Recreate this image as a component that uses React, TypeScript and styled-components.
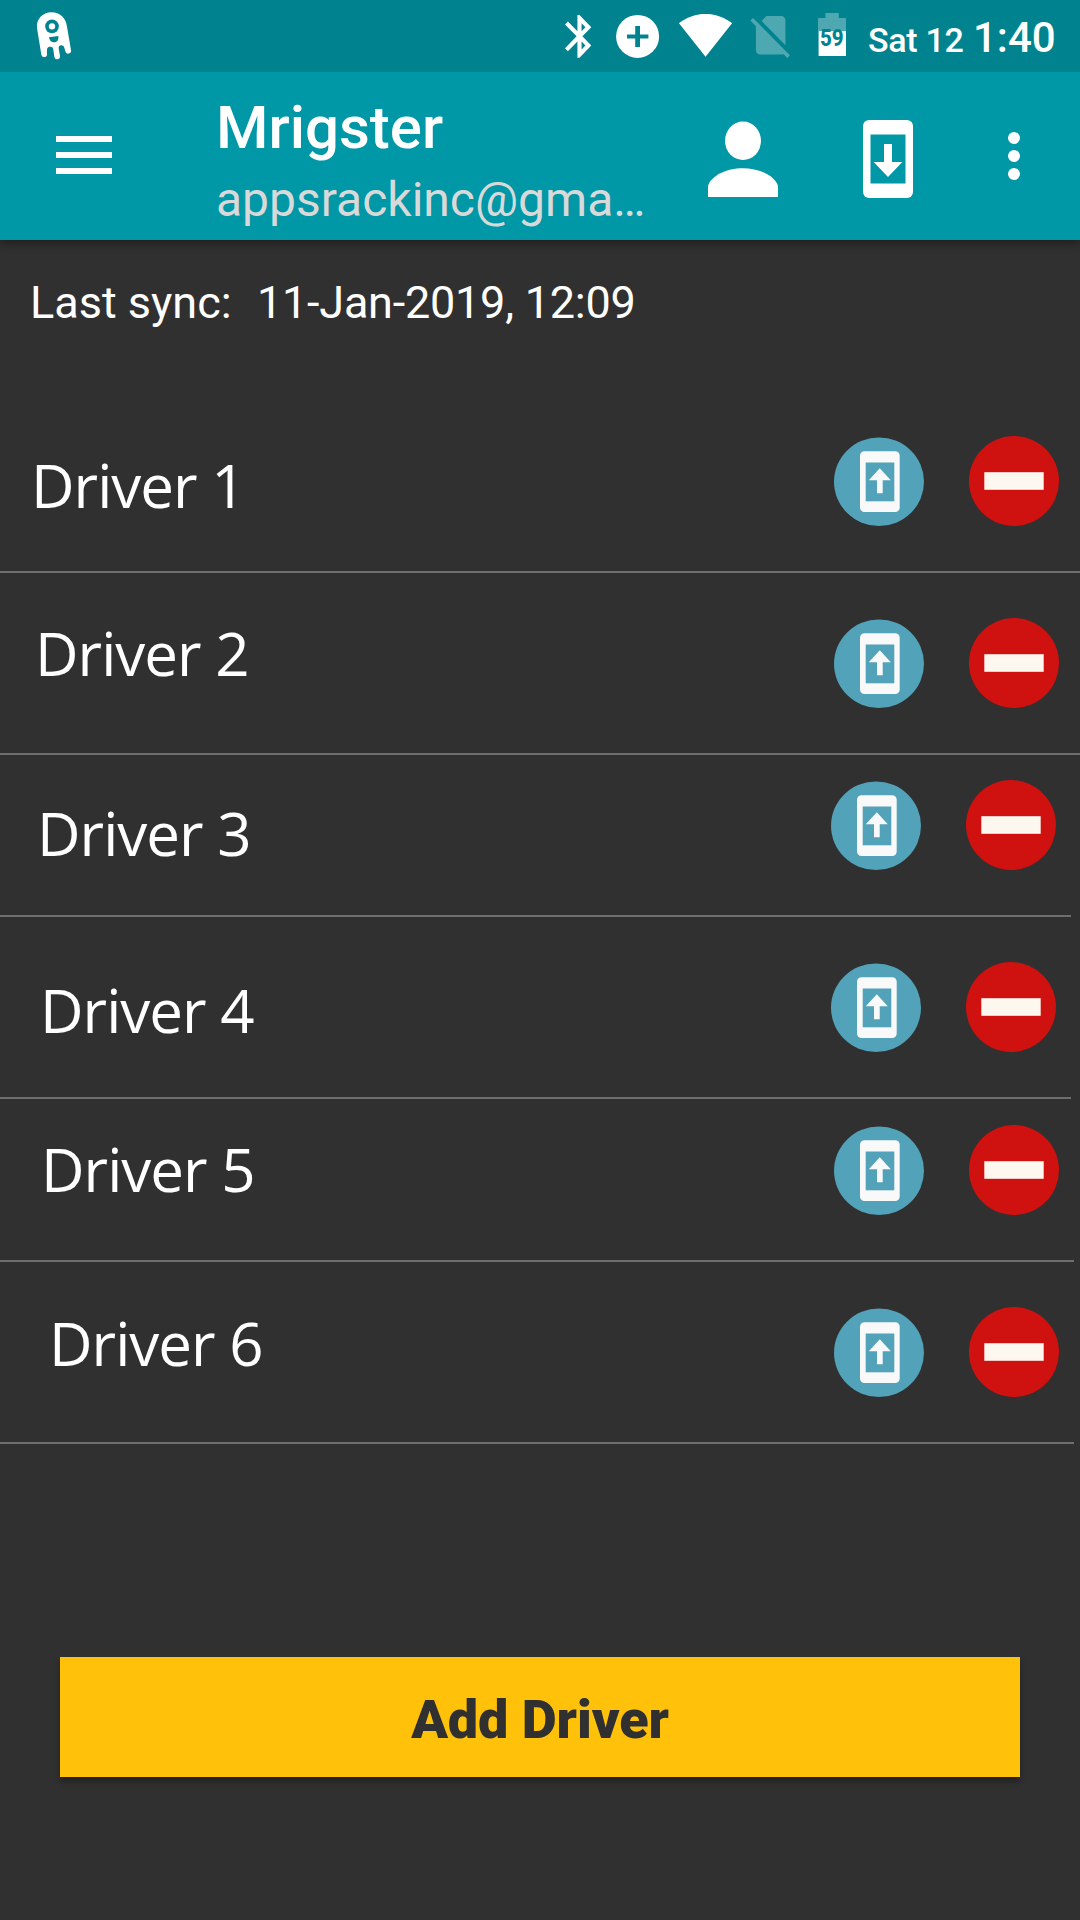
import React from "react";
import styled, { createGlobalStyle } from "styled-components";

const GlobalStyle = createGlobalStyle`
  *, *::before, *::after { box-sizing: border-box; }
  body { margin: 0; background: #303030; }
`;

const Screen = styled.div`
  width: 1080px;
  height: 1920px;
  display: flex;
  flex-direction: column;
  overflow: hidden;
  background: #303030;
  color: #fff;
  font-family: Roboto, "Liberation Sans", sans-serif;
`;

const StatusBar = styled.header`
  position: relative;
  z-index: 1;
  height: 72px;
  flex: none;
  display: flex;
  background: #00838f;
`;

const StatusNotifications = styled.div`
  width: 565px;
  flex: none;
  padding-left: 36px;
`;

const StatusIcon = styled.svg<{ $gap?: number }>`
  display: block;
  flex: none;
  margin-left: ${(p) => p.$gap ?? 0}px;
`;

const StatusDate = styled.span`
  width: 105px;
  flex: none;
  margin-left: 22px;
  font-size: 34px;
  font-weight: 500;
  line-height: 81px;
  letter-spacing: -0.3px;
  white-space: nowrap;
`;

const StatusClock = styled.span`
  font-size: 42px;
  font-weight: 500;
  line-height: 75px;
  white-space: nowrap;
`;

const AppBar = styled.nav`
  height: 168px;
  flex: none;
  display: flex;
  background: #0097a7;
  box-shadow: 0 3px 9px rgba(0, 0, 0, 0.4);
`;

const MenuButton = styled.button`
  width: 216px;
  flex: none;
  padding: 64px 0 0 56px;
  border: 0;
  background: none;
  display: flex;
  flex-direction: column;
  gap: 10px;
`;

const MenuLine = styled.span`
  width: 56px;
  height: 6px;
  background: #fff;
`;

const Account = styled.div`
  width: 492px;
  flex: none;
  padding-top: 20px;
  white-space: nowrap;
`;

const AccountName = styled.div`
  font-size: 60px;
  font-weight: 500;
  line-height: 72px;
`;

const AccountEmail = styled.div`
  font-size: 48px;
  line-height: 71px;
  color: #d9d9d9;
`;

const BarIcon = styled.svg<{ $gap?: number }>`
  display: block;
  flex: none;
  margin-left: ${(p) => p.$gap ?? 0}px;
`;

const SyncInfo = styled.div`
  height: 151px;
  flex: none;
  display: flex;
  padding: 35px 0 0 30px;
  font-size: 45px;
  line-height: 56px;
  white-space: pre;
`;

const SyncLabel = styled.span`
  width: 227px;
`;

const SyncDate = styled.span`
  letter-spacing: -0.24px;
`;

const DriverList = styled.ul`
  margin: 0;
  padding: 0;
  list-style: none;
`;

const DriverRow = styled.li<{ $height: number; $inset: number }>`
  width: ${(p) => 1080 - p.$inset}px;
  height: ${(p) => p.$height}px;
  display: flex;
  align-items: flex-end;
  justify-content: space-between;
  border-bottom: 2px solid #6e6e6e;
`;

const DriverName = styled.span<{ $left: number; $bottom: number }>`
  padding-left: ${(p) => p.$left}px;
  padding-bottom: ${(p) => p.$bottom}px;
  font-family: "Open Sans", "Noto Sans", sans-serif;
  font-size: 60px;
  line-height: 70px;
  letter-spacing: -0.95px;
  white-space: nowrap;
`;

const DriverActions = styled.div<{ $right: number }>`
  display: flex;
  gap: 45px;
  padding: 0 ${(p) => p.$right}px 45px 0;
`;

const ActionButton = styled.button`
  display: block;
  width: 90px;
  height: 90px;
  padding: 0;
  border: 0;
  background: none;
`;

const ActionIcon = styled.svg`
  display: block;
`;

const AddButton = styled.button`
  height: 120px;
  flex: none;
  margin: 213px 60px 0;
  padding: 5px 0 0;
  border: 0;
  background: #ffc10a;
  color: #303030;
  font-family: inherit;
  font-size: 54px;
  font-weight: 900;
  line-height: 115px;
  letter-spacing: -0.1px;
  box-shadow: 0 5px 6px rgba(0, 0, 0, 0.3);
`;

type Driver = {
  name: string;
  height: number;
  left: number;
  bottom: number;
  inset: number;
  right: number;
};

const drivers: Driver[] = [
  { name: "Driver 1", height: 182, left: 31, bottom: 51, inset: 0, right: 21 },
  { name: "Driver 2", height: 182, left: 35, bottom: 65, inset: 0, right: 21 },
  { name: "Driver 3", height: 162, left: 37, bottom: 47, inset: 9, right: 15 },
  { name: "Driver 4", height: 182, left: 40, bottom: 52, inset: 9, right: 15 },
  { name: "Driver 5", height: 163, left: 41, bottom: 56, inset: 6, right: 15 },
  { name: "Driver 6", height: 182, left: 49, bottom: 64, inset: 6, right: 15 },
];

const GhostIcon = () => (
  <StatusIcon width="36" height="72" viewBox="108 0 108 216" aria-hidden>
    <path
      fill="#fff"
      d="M111 84C108 58 128 37 154 37C180 37 198 54 201 80L213 150A8.5 8.5 0 0 1 196 154L193 143A8.5 8.5 0 0 0 176 145L180 168A8.5 8.5 0 0 1 163 170L160 149A9.5 9.5 0 0 0 141 150L141 161A8.5 8.5 0 0 1 124 164Z"
    />
    <circle cx="156" cy="79" r="20.5" fill="#00838f" />
    <circle cx="156" cy="79" r="9.5" fill="#fff" />
    <path fill="#00838f" d="M147 112L175 108C177 120 170 127 162 127C154 127 148 121 147 112Z" />
  </StatusIcon>
);

const BluetoothIcon = () => (
  <StatusIcon width="27" height="72" viewBox="0 0 27 72" aria-hidden>
    <path
      fill="#fff"
      transform="translate(0 15) scale(2.07 2.135) translate(-5 -2)"
      d="M17.71 7.71L12 2h-1v7.59L6.41 5 5 6.41 10.59 12 5 17.59 6.41 19 11 14.41V22h1l5.71-5.71-4.3-4.29 4.3-4.29zM13 5.83l1.88 1.88L13 9.59V5.83zm1.88 10.46L13 18.17v-3.76l1.88 1.88z"
    />
  </StatusIcon>
);

const DataSaverIcon = () => (
  <StatusIcon $gap={24} width="44" height="72" viewBox="0 0 44 72" aria-hidden>
    <circle cx="21.6" cy="36.4" r="21.5" fill="#fff" />
    <path fill="#00838f" d="M19.2 26h4.8v8.4h8.4v4.2H24V47h-4.8v-8.4H11v-4.2h8.2z" />
  </StatusIcon>
);

const WifiIcon = () => (
  <StatusIcon $gap={18} width="56" height="72" viewBox="0 0 56 72" aria-hidden>
    <path
      fill="#fff"
      transform="translate(1 14) scale(2.28 2.31) translate(-.36 -3)"
      d="M12.01 21.49L23.64 7c-.45-.34-4.93-4-11.64-4C5.28 3 .81 6.66.36 7l11.63 14.49z"
    />
  </StatusIcon>
);

const NoSimIcon = () => (
  <StatusIcon $gap={16} width="41" height="72" viewBox="0 0 41 72" aria-hidden>
    <path
      fill="#4da8b1"
      transform="translate(.4 16) scale(2.11 2.14) translate(-2.38 -3)"
      d="M18.99 5c0-1.1-.89-2-1.99-2h-7L7.66 5.34 19 16.68 18.99 5zM3.65 3.88L2.38 5.15 5 7.77V19c0 1.1.9 2 2 2h10.01c.35 0 .67-.1.96-.26l1.88 1.88 1.27-1.27L3.65 3.88z"
    />
  </StatusIcon>
);

const BatteryIcon = () => (
  <StatusIcon $gap={27} width="28" height="72" viewBox="0 0 28 72" aria-hidden>
    <path fill="#4da8b1" d="M7.4 13h13.4v5H28v13H0V18h7.4z" />
    <path fill="#fff" d="M.6 31H28v25H.6z" />
    <text
      x="13.8"
      y="45.6"
      fill="#00838f"
      fontFamily="Roboto, sans-serif"
      fontSize="23"
      fontWeight="800"
      textAnchor="middle"
      textLength="23.6"
      lengthAdjust="spacingAndGlyphs"
    >
      59
    </text>
  </StatusIcon>
);

const PersonIcon = () => (
  <BarIcon width="70" height="168" viewBox="0 0 70 168" aria-hidden>
    <ellipse cx="35" cy="68.8" rx="18" ry="19.2" fill="#fff" />
    <path fill="#fff" d="M0 125V114C3 104 18 96.3 35 96.3S67 104 70 114V125Z" />
  </BarIcon>
);

const PhoneDownIcon = () => (
  <BarIcon $gap={85} width="50" height="168" viewBox="0 0 50 168" aria-hidden>
    <rect y="48" width="50" height="78" rx="6" fill="#fff" />
    <rect x="7.5" y="62.5" width="35" height="49" fill="#0097a7" />
    <path fill="#fff" d="M21 72h8v18h10.3L25 105 10.7 90H21z" />
  </BarIcon>
);

const OverflowIcon = () => (
  <BarIcon $gap={95} width="12" height="168" viewBox="0 0 12 168" aria-hidden>
    <circle cx="6" cy="66" r="6" fill="#fff" />
    <circle cx="6" cy="84" r="6" fill="#fff" />
    <circle cx="6" cy="102" r="6" fill="#fff" />
  </BarIcon>
);

const UploadIcon = () => (
  <ActionIcon width="90" height="90" viewBox="0 0 90 90" aria-hidden>
    <ellipse cx="45" cy="45.7" rx="45" ry="44.3" fill="#52a2ba" />
    <rect x="26" y="15.2" width="39.7" height="60.8" rx="4.5" fill="#f9f9f9" />
    <rect x="31.7" y="26.5" width="28.6" height="38.8" fill="#52a2ba" />
    <path fill="#f9f9f9" d="M45.8 32.3L56.8 44.2H48.7V57.2H43V44.2H34.8Z" />
  </ActionIcon>
);

const RemoveIcon = () => (
  <ActionIcon width="90" height="90" viewBox="0 0 90 90" aria-hidden>
    <circle cx="45" cy="45" r="45" fill="#cf110f" />
    <rect x="15.3" y="36.2" width="59.4" height="17.6" fill="#fcf8f0" />
  </ActionIcon>
);

export default function App() {
  return (
    <>
      <GlobalStyle />
      <Screen>
        <StatusBar>
          <StatusNotifications>
            <GhostIcon />
          </StatusNotifications>
          <BluetoothIcon />
          <DataSaverIcon />
          <WifiIcon />
          <NoSimIcon />
          <BatteryIcon />
          <StatusDate>Sat 12</StatusDate>
          <StatusClock>1:40</StatusClock>
        </StatusBar>
        <AppBar>
          <MenuButton aria-label="Menu">
            <MenuLine />
            <MenuLine />
            <MenuLine />
          </MenuButton>
          <Account>
            <AccountName>Mrigster</AccountName>
            <AccountEmail>appsrackinc@gma…</AccountEmail>
          </Account>
          <PersonIcon />
          <PhoneDownIcon />
          <OverflowIcon />
        </AppBar>
        <SyncInfo>
          <SyncLabel>Last sync:</SyncLabel>
          <SyncDate>11-Jan-2019, 12:09</SyncDate>
        </SyncInfo>
        <DriverList>
          {drivers.map((d) => (
            <DriverRow key={d.name} $height={d.height} $inset={d.inset}>
              <DriverName $left={d.left} $bottom={d.bottom}>
                {d.name}
              </DriverName>
              <DriverActions $right={d.right}>
                <ActionButton aria-label={`Upload ${d.name}`}>
                  <UploadIcon />
                </ActionButton>
                <ActionButton aria-label={`Remove ${d.name}`}>
                  <RemoveIcon />
                </ActionButton>
              </DriverActions>
            </DriverRow>
          ))}
        </DriverList>
        <AddButton>Add Driver</AddButton>
      </Screen>
    </>
  );
}
